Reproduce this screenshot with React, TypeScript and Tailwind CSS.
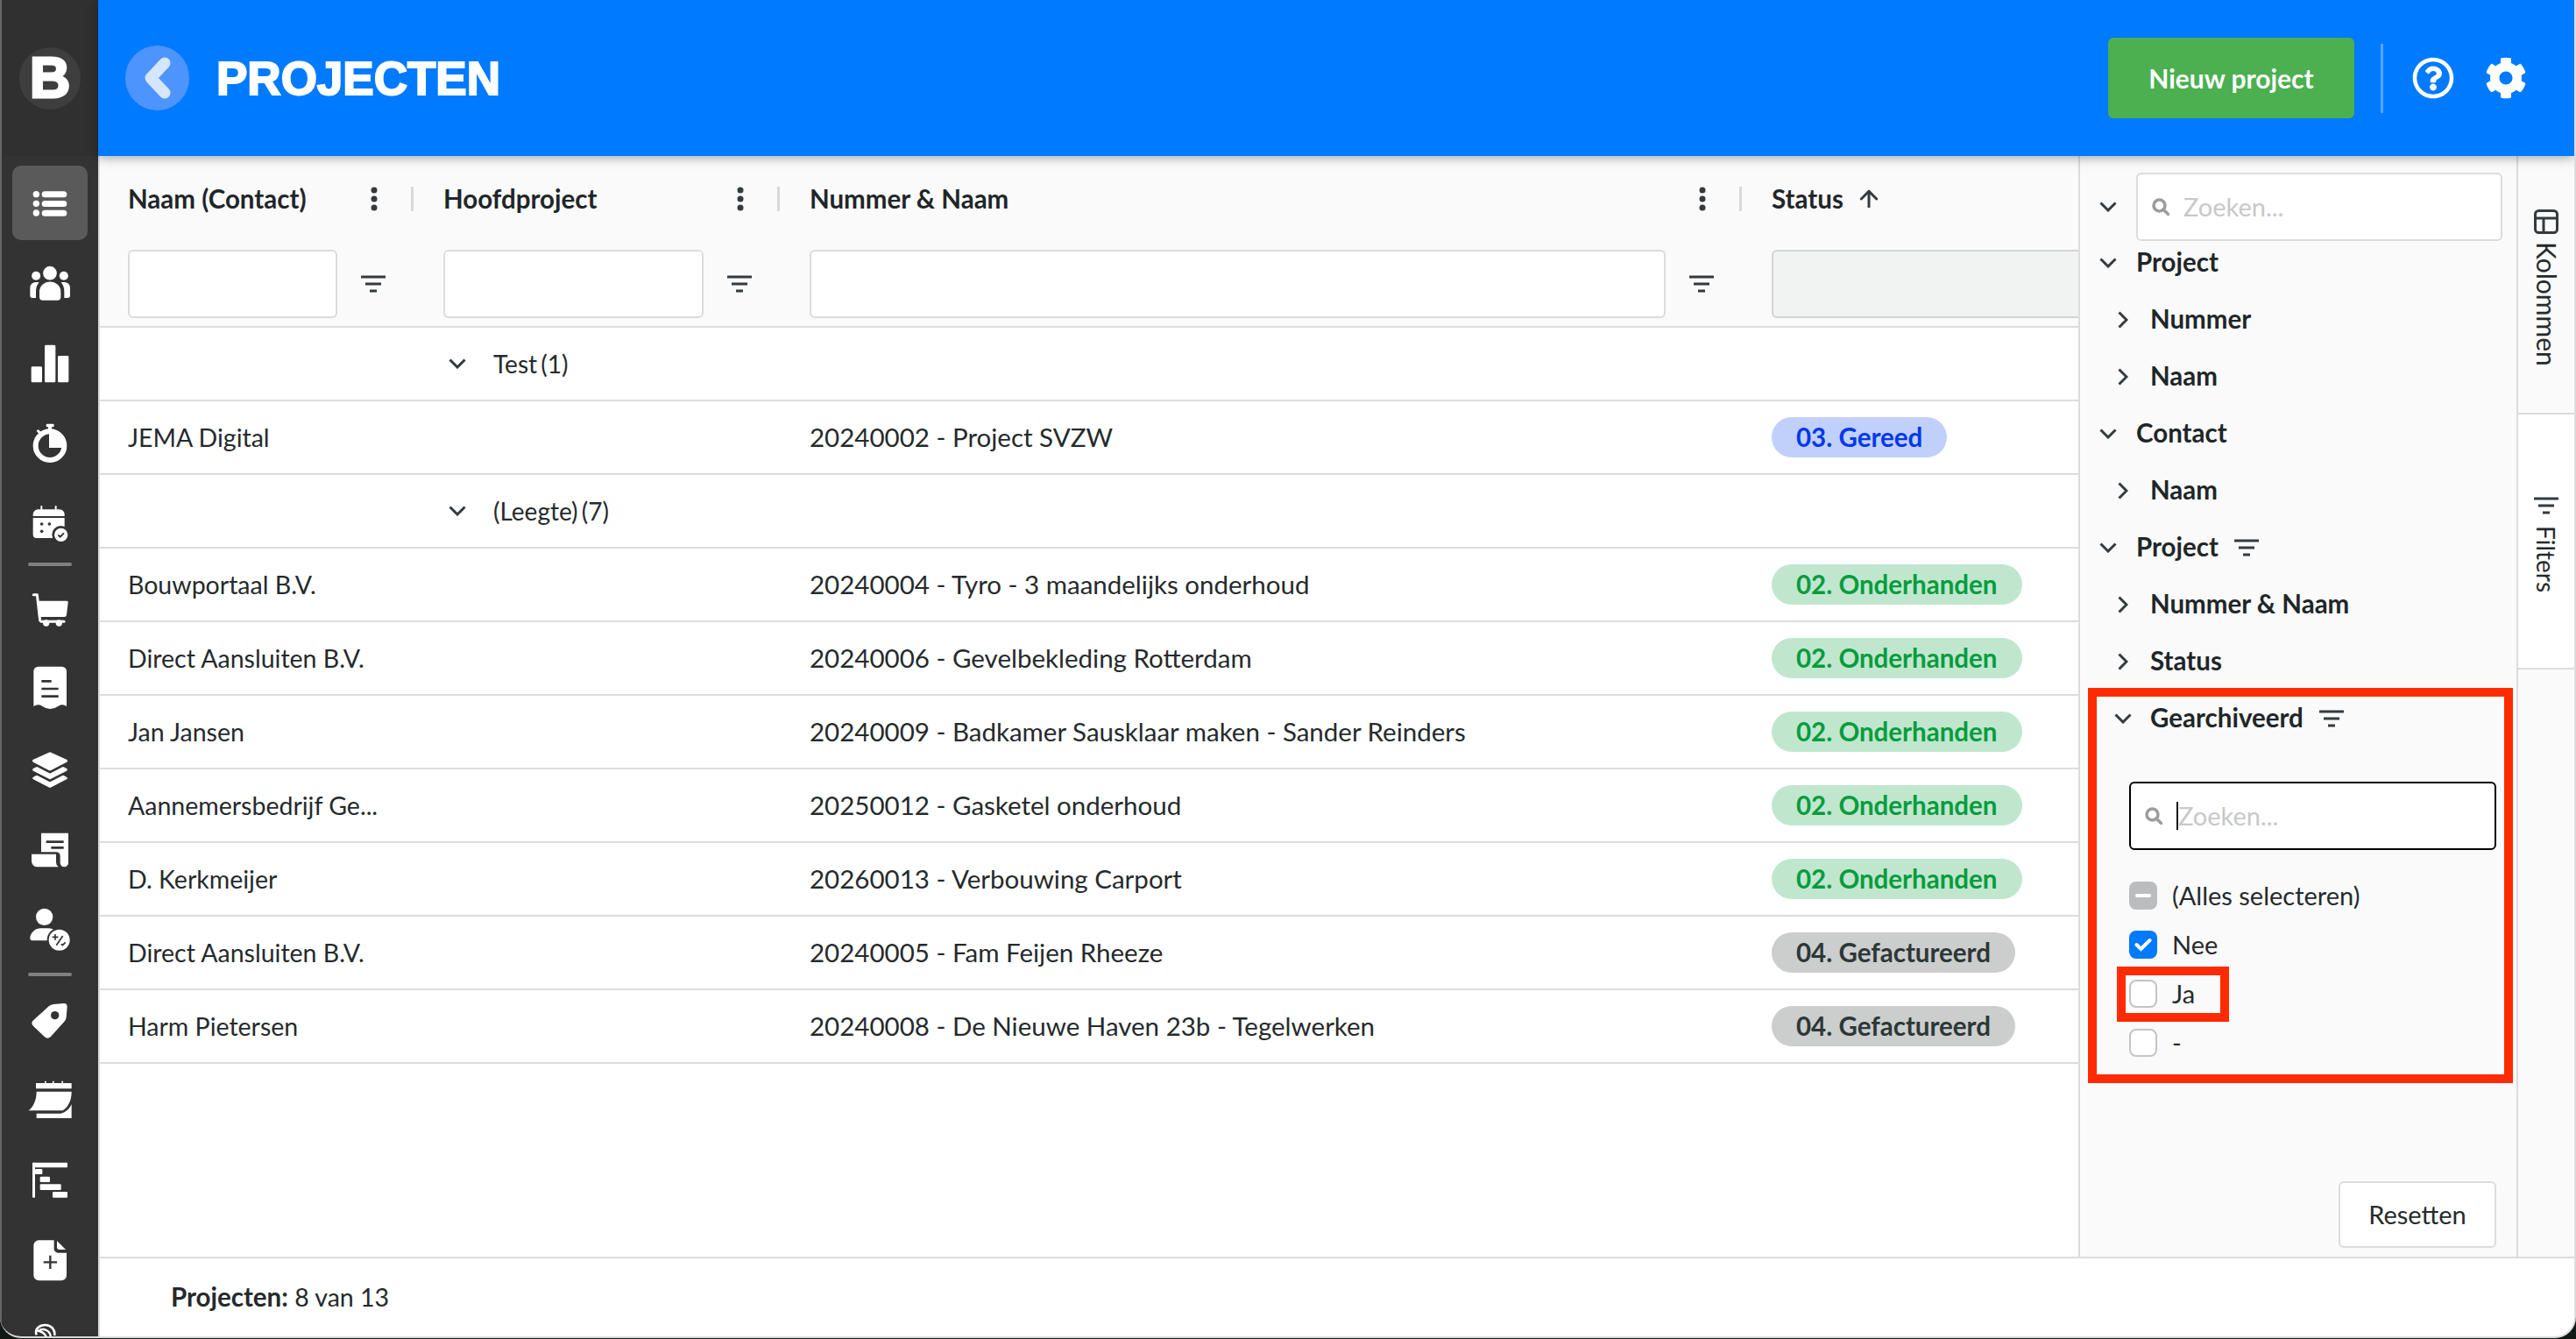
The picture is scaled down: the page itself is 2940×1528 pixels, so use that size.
import { ArrowUp } from "lucide-react";
import { FaCog, FaRegQuestionCircle } from "react-icons/fa";
import type { ReactNode } from "react";

const DARK = "#333333";

// sidebar icons are drawn in 3x units, centred on (168, cy)
function SideIcon({ cy, children }: { cy: number; children: ReactNode }) {
  return (
    <svg width="80" height="80" viewBox={`48 ${cy - 120} 240 240`} fill="#fff" className="overflow-visible">
      {children}
    </svg>
  );
}

function Slot({ active, children }: { active?: boolean; children: ReactNode }) {
  return (
    <div className={`mx-[12px] h-[85px] shrink-0 rounded-[10px] flex items-center justify-center ${active ? "bg-[#5a5a5a]" : ""}`}>
      {children}
    </div>
  );
}

function SideSep({ className }: { className: string }) {
  return <div className={`mx-[30px] h-[4px] shrink-0 rounded-full bg-[#808080] ${className}`} />;
}

function Sidebar() {
  return (
    <aside className="w-[112px] shrink-0 border-l-2 border-[#666] bg-[#333] flex flex-col overflow-hidden">
      <div className="h-[178px] shrink-0 flex items-center justify-center bg-[#303030]">
        <div className="w-[70px] h-[71px] rounded-full bg-[#3e3e3e] flex items-center justify-center font-['Liberation_Sans'] font-bold text-[64px] leading-none text-white [-webkit-text-stroke:3px_#fff]">
          B
        </div>
      </div>
      <div className="pt-[11px] flex flex-col gap-[6.5px]">
        <Slot active>
          <SideIcon cy={153}>
            <circle cx="121" cy="122" r="11" />
            <circle cx="121" cy="154" r="11" />
            <circle cx="121" cy="186" r="11" />
            <rect x="140" y="112" width="86" height="21" rx="10.5" />
            <rect x="140" y="144" width="86" height="21" rx="10.5" />
            <rect x="140" y="176" width="86" height="21" rx="10.5" />
          </SideIcon>
        </Slot>
        <Slot>
          <SideIcon cy={426}>
            <circle cx="168" cy="392" r="23.5" />
            <circle cx="120.5" cy="401" r="15" />
            <circle cx="215.5" cy="401" r="15" />
            <path d="M132 456a36 34 0 0 1 73 0v18a11 11 0 0 1-11 11h-51a11 11 0 0 1-11-11z" />
            <path d="M131 423c-7 8-11 19-11 32v22h-12a8 8 0 0 1-8-8v-27a19 19 0 0 1 19-19z" />
            <path d="M206 423c7 8 11 19 11 32v22h12a8 8 0 0 0 8-8v-27a19 19 0 0 0-19-19z" />
          </SideIcon>
        </Slot>
        <Slot>
          <SideIcon cy={702}>
            <rect x="104" y="712" width="37" height="54" rx="4" />
            <rect x="150" y="638" width="37" height="128" rx="4" />
            <rect x="195" y="675" width="37" height="91" rx="4" />
          </SideIcon>
        </Slot>
        <Slot>
          <SideIcon cy={75}>
            <rect x="155" y="8" width="27" height="11" rx="4" />
            <rect x="162" y="14" width="12" height="14" />
            <rect x="123" y="30" width="14" height="9" rx="3" transform="rotate(40 130 34)" />
            <circle cx="168" cy="83" r="49" fill="none" stroke="#fff" stroke-width="18" />
            <path d="M165 40a44 44 0 0 1 44 50h-44z" />
          </SideIcon>
        </Slot>
        <Slot>
          <SideIcon cy={345}>
            <rect x="136" y="282" width="6" height="16" rx="3" />
            <rect x="185" y="282" width="6" height="16" rx="3" />
            <path d="M110 318v-6a17 17 0 0 1 17-17h74a17 17 0 0 1 17 17v6z" />
            <path d="M110 324h108v69H122a12 12 0 0 1-12-12z" />
            <circle cx="140" cy="345" r="5.5" fill={DARK} />
            <circle cx="166" cy="345" r="5.5" fill={DARK} />
            <circle cx="140" cy="370" r="5.5" fill={DARK} />
            <circle cx="205" cy="381" r="30" fill={DARK} />
            <circle cx="206" cy="382" r="23" />
            <path d="M196 382l7 7 13-13" fill="none" stroke={DARK} stroke-width="6" />
          </SideIcon>
        </Slot>
      </div>
      <SideSep className="mt-[2px] mb-[6.5px]" />
      <div className="flex flex-col gap-[6.5px]">
        <Slot>
          <SideIcon cy={645}>
            <path d="M112 596h12l10 88" fill="none" stroke="#fff" stroke-width="9" stroke-linecap="round" stroke-linejoin="round" />
            <path d="M124 617h102q5 0 4 5l-5 43q-1 7-8 7h-87z" />
            <path d="M138 688h78" stroke="#fff" stroke-width="9" stroke-linecap="round" />
            <circle cx="155" cy="693" r="11" />
            <circle cx="199" cy="693" r="11" />
          </SideIcon>
        </Slot>
        <Slot>
          <SideIcon cy={17}>
            <path d="M128-62h81a16 16 0 0 1 16 16V74q-14-10-28-1-14 10-28 10-14 0-28-10-14-9-29 1V-46a16 16 0 0 1 16-16z" />
            <path d="M139-12h34M139 14h58M139 40h58" stroke={DARK} stroke-width="8" fill="none" />
          </SideIcon>
        </Slot>
        <Slot>
          <SideIcon cy={294}>
            <path d="M168 240l55 25-55 28-55-28z" stroke="#fff" stroke-width="10" stroke-linejoin="round" />
            <path d="M113 295l10-5 45 23 45-23 10 5-55 28z" stroke="#fff" stroke-width="9" stroke-linejoin="round" />
            <path d="M113 324l10-5 45 23 45-23 10 5-55 28z" stroke="#fff" stroke-width="9" stroke-linejoin="round" />
          </SideIcon>
        </Slot>
        <Slot>
          <SideIcon cy={568}>
            <path d="M138 510h93v102a14 14 0 0 1-28 0v-22q0-15-15-15h-50z" />
            <path d="M105 582h84v28q0 10 8 16h-72a20 20 0 0 1-20-20z" />
            <path d="M155 540h60M172 560h43" stroke={DARK} stroke-width="8" fill="none" />
          </SideIcon>
        </Slot>
        <Slot>
          <SideIcon cy={843}>
            <circle cx="149" cy="799" r="29" />
            <path d="M100 872a38 34 0 0 1 38-34h24a38 34 0 0 1 28 12v30h-78q-12 0-12-8z" />
            <circle cx="200" cy="878" r="42" fill={DARK} />
            <circle cx="200" cy="878" r="36" />
            <path d="M176 868h20M186 858v20M190 896l22-32M206 892l5 4 10-10" stroke={DARK} stroke-width="5" fill="none" />
          </SideIcon>
        </Slot>
      </div>
      <SideSep className="mt-[6.5px] mb-[8px]" />
      <div className="flex flex-col gap-[6.5px]">
        <Slot>
          <SideIcon cy={253}>
            <path d="M112 250l53-48q7-5 15-6l35-3q12-1 12 12l-3 35q-1 10-8 17l-46 51q-10 8-20 0l-38-36q-12-12 0-22z" />
            <circle cx="185" cy="234" r="14" fill={DARK} />
          </SideIcon>
        </Slot>
        <Slot>
          <SideIcon cy={528}>
            <path d="M120 468h30v-7h5v7h22v-7h5v7h26v-7h5v7h29v19H120z" />
            <path d="M122 497h120c0 28-10 51-30 65H95c17-14 27-37 27-65z" />
            <path d="M242 540v48H122v-16h83c17-4 31-17 37-32z" />
          </SideIcon>
        </Slot>
        <Slot>
          <SideIcon cy={802}>
            <rect x="108" y="738" width="120" height="17" rx="3" />
            <rect x="108" y="738" width="9" height="120" rx="3" />
            <rect x="117" y="760" width="25" height="18" rx="3" />
            <rect x="134" y="786" width="34" height="19" rx="3" />
            <rect x="134" y="812" width="72" height="20" rx="3" />
            <rect x="177" y="838" width="51" height="20" rx="3" />
          </SideIcon>
        </Slot>
        <Slot>
          <SideIcon cy={177}>
            <path d="M130 106h52v29a14 14 0 0 0 14 14h29v77a18 18 0 0 1-18 18h-77a18 18 0 0 1-18-18V124a18 18 0 0 1 18-18z" />
            <path d="M192 108l30 30h-22a8 8 0 0 1-8-8z" />
            <path d="M146 181h46M169 158v46" stroke={DARK} stroke-width="7" fill="none" />
          </SideIcon>
        </Slot>
        <Slot>
          <SideIcon cy={451}>
            <path d="M122 428c-8-22 12-34 30-34 18 0 34 14 32 36" fill="none" stroke="#fff" stroke-width="8" />
            <path d="M132 412c16-8 38 2 38 22M120 412c20 4 34 14 36 26" fill="none" stroke="#fff" stroke-width="7" />
          </SideIcon>
        </Slot>
      </div>
    </aside>
  );
}

function Header() {
  return (
    <header className="relative z-10 h-[178px] shrink-0 bg-[#007aff] flex items-center pl-[31px] pr-[54px] shadow-[0_2px_12px_rgba(0,0,0,0.35)]">
      <div className="w-[73px] h-[74px] rounded-full bg-[#4d94ff] flex items-center justify-center">
        <svg width="34" height="48" viewBox="0 0 34 48" fill="none">
          <path d="M25 7L9 24l16 17" stroke="#d6e6ff" stroke-width="13" stroke-linecap="round" stroke-linejoin="round" />
        </svg>
      </div>
      <h1 className="ml-[31px] font-['Liberation_Sans'] font-bold text-[53px] leading-none text-white [-webkit-text-stroke:2px_#fff]">PROJECTEN</h1>
      <button className="ml-auto w-[281px] h-[92px] rounded-[6px] bg-[#4caf50] text-white text-[30px] font-bold">Nieuw project</button>
      <div className="ml-[30px] w-[3px] h-[79px] bg-[#5aa5ff]" />
      <FaRegQuestionCircle className="ml-[33px] text-white" size={48} />
      <FaCog className="ml-[35px] text-white" size={48} />
    </header>
  );
}

function FilterIcon({ className = "", color = "#333b3f" }: { className?: string; color?: string }) {
  return (
    <svg width="28" height="20" viewBox="0 0 28 20" className={`shrink-0 ${className}`} stroke={color} stroke-width="3" fill="none">
      <path d="M0 2h28M5 10h18M10 18h8" />
    </svg>
  );
}

function Dots() {
  return (
    <svg width="8" height="28" viewBox="0 0 8 28" fill="#333b3f" className="shrink-0">
      <circle cx="4" cy="4" r="3.5" />
      <circle cx="4" cy="14" r="3.5" />
      <circle cx="4" cy="24" r="3.5" />
    </svg>
  );
}

function HeadCell({ width, first, label }: { width: string; first?: boolean; label: string }) {
  return (
    <div className={`${width} ${first ? "pl-[32px]" : "pl-[34px]"} shrink-0`}>
      <div className="h-[98px] flex items-center">
        <span className="flex-1 text-[29.5px] font-bold text-[#1f2629]">{label}</span>
        <Dots />
        <div className="ml-[38px] w-[3px] h-[28px] bg-[#d8d8d8]" />
      </div>
      <div className="h-[96px] flex items-center">
        <div className="flex-1 h-[78px] rounded-[6px] border-2 border-[#dcdcdc] bg-white" />
        <FilterIcon className="ml-[27px] mr-[32px]" />
      </div>
    </div>
  );
}

function Badge({ kind, children }: { kind: "blue" | "green" | "grey"; children: string }) {
  const colors = {
    blue: "bg-[#c1d0fb] text-[#0038ee]",
    green: "bg-[#c0e7ce] text-[#069c3e]",
    grey: "bg-[#cccdcd] text-[#2c3837]",
  };
  return <span className={`h-[46px] px-[28px] rounded-full inline-flex items-center text-[29.5px] font-bold ${colors[kind]}`}>{children}</span>;
}

function GroupRow({ label }: { label: string }) {
  return (
    <div className="h-[84px] border-b-2 border-[#dcdcdc] flex items-center pl-[398px]">
      <Chevron dir="down" />
      <span className="ml-[31px] text-[28px] [word-spacing:-3px] text-[#252a2c]">{label}</span>
    </div>
  );
}

function DataRow({ contact, project, status, kind }: { contact: string; project: string; status: string; kind: "blue" | "green" | "grey" }) {
  return (
    <div className="h-[84px] border-b-2 border-[#dcdcdc] flex items-center text-[#252a2c]">
      <div className="w-[358px] pl-[32px] shrink-0 whitespace-nowrap text-[28.5px]">{contact}</div>
      <div className="w-[418px] shrink-0" />
      <div className="w-[1099px] pl-[34px] shrink-0 whitespace-nowrap text-[29.5px]">{project}</div>
      <div className="pl-[33px] shrink-0">
        <Badge kind={kind}>{status}</Badge>
      </div>
    </div>
  );
}

function Chevron({ dir }: { dir: "down" | "right" }) {
  if (dir === "down") {
    return (
      <svg width="20" height="12" viewBox="0 0 20 12" fill="none" stroke="#333b3f" stroke-width="3" className="shrink-0">
        <path d="M1.5 1.5L10 10l8.5-8.5" />
      </svg>
    );
  }
  return (
    <svg width="12" height="20" viewBox="0 0 12 20" fill="none" stroke="#333b3f" stroke-width="3" className="shrink-0">
      <path d="M1.5 1.5L10 10l-8.5 8.5" />
    </svg>
  );
}

function Table() {
  return (
    <section className="w-[2258px] shrink-0 overflow-hidden flex flex-col">
      <div className="h-[196px] shrink-0 flex w-[2500px] bg-[#fafafa] border-b-2 border-[#dcdcdc]">
        <HeadCell first width="w-[358px]" label="Naam (Contact)" />
        <HeadCell width="w-[418px]" label="Hoofdproject" />
        <HeadCell width="w-[1098px]" label="Nummer & Naam" />
        <div className="w-[600px] pl-[34px]">
          <div className="h-[98px] flex items-center gap-[14px] text-[29.5px] font-bold text-[#1f2629]">
            Status
            <ArrowUp size={30} strokeWidth={2.4} color="#333b3f" />
          </div>
          <div className="h-[96px] flex items-center">
            <div className="w-[500px] h-[78px] rounded-[6px] border-2 border-[#d4d4d4] bg-[#f1f3f3]" />
          </div>
        </div>
      </div>
      <div className="w-[2500px]">
        <GroupRow label="Test (1)" />
        <DataRow contact="JEMA Digital" project="20240002 - Project SVZW" status="03. Gereed" kind="blue" />
        <GroupRow label="(Leegte) (7)" />
        <DataRow contact="Bouwportaal B.V." project="20240004 - Tyro - 3 maandelijks onderhoud" status="02. Onderhanden" kind="green" />
        <DataRow contact="Direct Aansluiten B.V." project="20240006 - Gevelbekleding Rotterdam" status="02. Onderhanden" kind="green" />
        <DataRow contact="Jan Jansen" project="20240009 - Badkamer Sausklaar maken - Sander Reinders" status="02. Onderhanden" kind="green" />
        <DataRow contact="Aannemersbedrijf Ge..." project="20250012 - Gasketel onderhoud" status="02. Onderhanden" kind="green" />
        <DataRow contact="D. Kerkmeijer" project="20260013 - Verbouwing Carport" status="02. Onderhanden" kind="green" />
        <DataRow contact="Direct Aansluiten B.V." project="20240005 - Fam Feijen Rheeze" status="04. Gefactureerd" kind="grey" />
        <DataRow contact="Harm Pietersen" project="20240008 - De Nieuwe Haven 23b - Tegelwerken" status="04. Gefactureerd" kind="grey" />
      </div>
    </section>
  );
}

function SearchIcon() {
  return (
    <svg width="20" height="20" viewBox="0 0 20 20" fill="none" stroke="#9c9c9c" stroke-width="3.5" className="shrink-0">
      <circle cx="8.5" cy="8.5" r="6.5" />
      <path d="M13 13l5.5 5.5" stroke-linecap="round" />
    </svg>
  );
}

function TreeRow({ level, label, filter, open }: { level: 1 | 2; label: string; filter?: boolean; open?: boolean }) {
  return (
    <div className={`h-[65px] shrink-0 flex items-center text-[29.5px] font-bold text-[#1f2629] ${level === 1 ? "pl-[22px]" : "pl-[39px]"}`}>
      <div className={level === 1 ? "w-[42px] flex" : "w-[41px] flex pl-[4px]"}>
        {level === 1 || open ? (
          <div className={level === 2 ? "-ml-[4px]" : ""}>
            <Chevron dir="down" />
          </div>
        ) : (
          <Chevron dir="right" />
        )}
      </div>
      {label}
      {filter && <FilterIcon className="ml-[18px]" />}
    </div>
  );
}

function CheckRow({ state, label }: { state: "mixed" | "on" | "off"; label: string }) {
  const box = {
    mixed: "bg-[#bbbcbe]",
    on: "bg-[#007aff]",
    off: "bg-white border-2 border-[#c4c4c4]",
  };
  return (
    <div className="h-[56px] flex items-center text-[29px] text-[#252a2c]">
      <div className={`w-[32px] h-[32px] rounded-[8px] flex items-center justify-center ${box[state]}`}>
        {state === "mixed" && <div className="w-[18px] h-[4px] rounded-full bg-white" />}
        {state === "on" && (
          <svg width="20" height="16" viewBox="0 0 20 16" fill="none" stroke="#fff" stroke-width="4" stroke-linecap="round">
            <path d="M2.5 8l5 5 10-10" />
          </svg>
        )}
      </div>
      <span className="ml-[17px]">{label}</span>
    </div>
  );
}

function FilterPanel() {
  return (
    <section className="relative w-[502px] shrink-0 bg-[#fafafa] border-x-2 border-[#dcdcdc] flex flex-col">
      <div className="pt-[19px] pl-[22px] flex items-center -mb-[8px]">
        <div className="w-[42px] flex">
          <Chevron dir="down" />
        </div>
        <div className="w-[418px] h-[78px] rounded-[6px] border-2 border-[#dcdcdc] bg-white flex items-center pl-[16px] gap-[16px] text-[29px] text-[#c8c8c8]">
          <SearchIcon />
          Zoeken...
        </div>
      </div>
      <TreeRow level={1} label="Project" />
      <TreeRow level={2} label="Nummer" />
      <TreeRow level={2} label="Naam" />
      <TreeRow level={1} label="Contact" />
      <TreeRow level={2} label="Naam" />
      <TreeRow level={1} label="Project" filter />
      <TreeRow level={2} label="Nummer & Naam" />
      <TreeRow level={2} label="Status" />
      <TreeRow level={2} label="Gearchiveerd" filter open />
      <div className="pl-[56px] pr-[23px] pt-[40px]">
        <div className="h-[78px] rounded-[6px] border-2 border-black bg-white flex items-center pl-[16px] text-[29px] text-[#c8c8c8]">
          <SearchIcon />
          <div className="ml-[16px] w-[2px] h-[32px] bg-[#111]" />
          Zoeken...
        </div>
        <div className="mt-[24px]">
          <CheckRow state="mixed" label="(Alles selecteren)" />
          <CheckRow state="on" label="Nee" />
          <CheckRow state="off" label="Ja" />
          <CheckRow state="off" label="-" />
        </div>
      </div>
      <button className="mt-auto mb-[10px] ml-auto mr-[23px] w-[180px] h-[76px] rounded-[6px] border-2 border-[#dcdcdc] bg-white text-[29px] text-[#252a2c]">
        Resetten
      </button>
      {/* annotation boxes drawn over the panel */}
      <div className="absolute left-[9px] top-[607px] w-[485px] h-[451px] border-[10px] border-[#fe2b00]" />
      <div className="absolute left-[42px] top-[925px] w-[128px] h-[63px] border-[10px] border-[#fe2b00]" />
    </section>
  );
}

function SideTabs() {
  return (
    <div className="flex-1 min-w-0 flex flex-col bg-[#fafafa]">
      <div className="h-[295px] shrink-0 border-b-2 border-[#dcdcdc] flex flex-col items-center pt-[61px] gap-[9px]">
        <svg width="28" height="28" viewBox="0 0 28 28" fill="none" stroke="#333b3f" stroke-width="3" className="shrink-0">
          <rect x="1.5" y="1.5" width="25" height="25" rx="4" />
          <path d="M1.5 10h25M11 10v16.5" />
        </svg>
        <span className="[writing-mode:vertical-rl] text-[30px] text-[#252a2c]">Kolommen</span>
      </div>
      <div className="h-[291px] shrink-0 bg-white border-b-2 border-[#dcdcdc] flex flex-col items-center pt-[94px] gap-[13px]">
        <FilterIcon />
        <span className="[writing-mode:vertical-rl] text-[28px] text-[#252a2c]">Filters</span>
      </div>
    </div>
  );
}

export default function App() {
  return (
    <div className="w-[2940px] h-[1528px] bg-[#0f1a12] overflow-hidden font-[Lato,sans-serif]">
      <div className="w-full h-[1527px] rounded-b-[24px] overflow-hidden flex bg-white border-r-2 border-b-2 border-[#dcdcdc]">
        <Sidebar />
        <main className="flex-1 min-w-0 flex flex-col">
          <Header />
          <div className="flex-1 min-h-0 flex border-l-2 border-[#dcdcdc]">
            <Table />
            <FilterPanel />
            <SideTabs />
          </div>
          <footer className="h-[91px] shrink-0 border-l-2 border-t-2 border-[#dcdcdc] flex items-center pl-[81px] text-[28.5px] text-[#252a2c]">
            <b className="font-bold text-[29.5px]">Projecten:</b>&nbsp;8 van 13
          </footer>
        </main>
      </div>
    </div>
  );
}
